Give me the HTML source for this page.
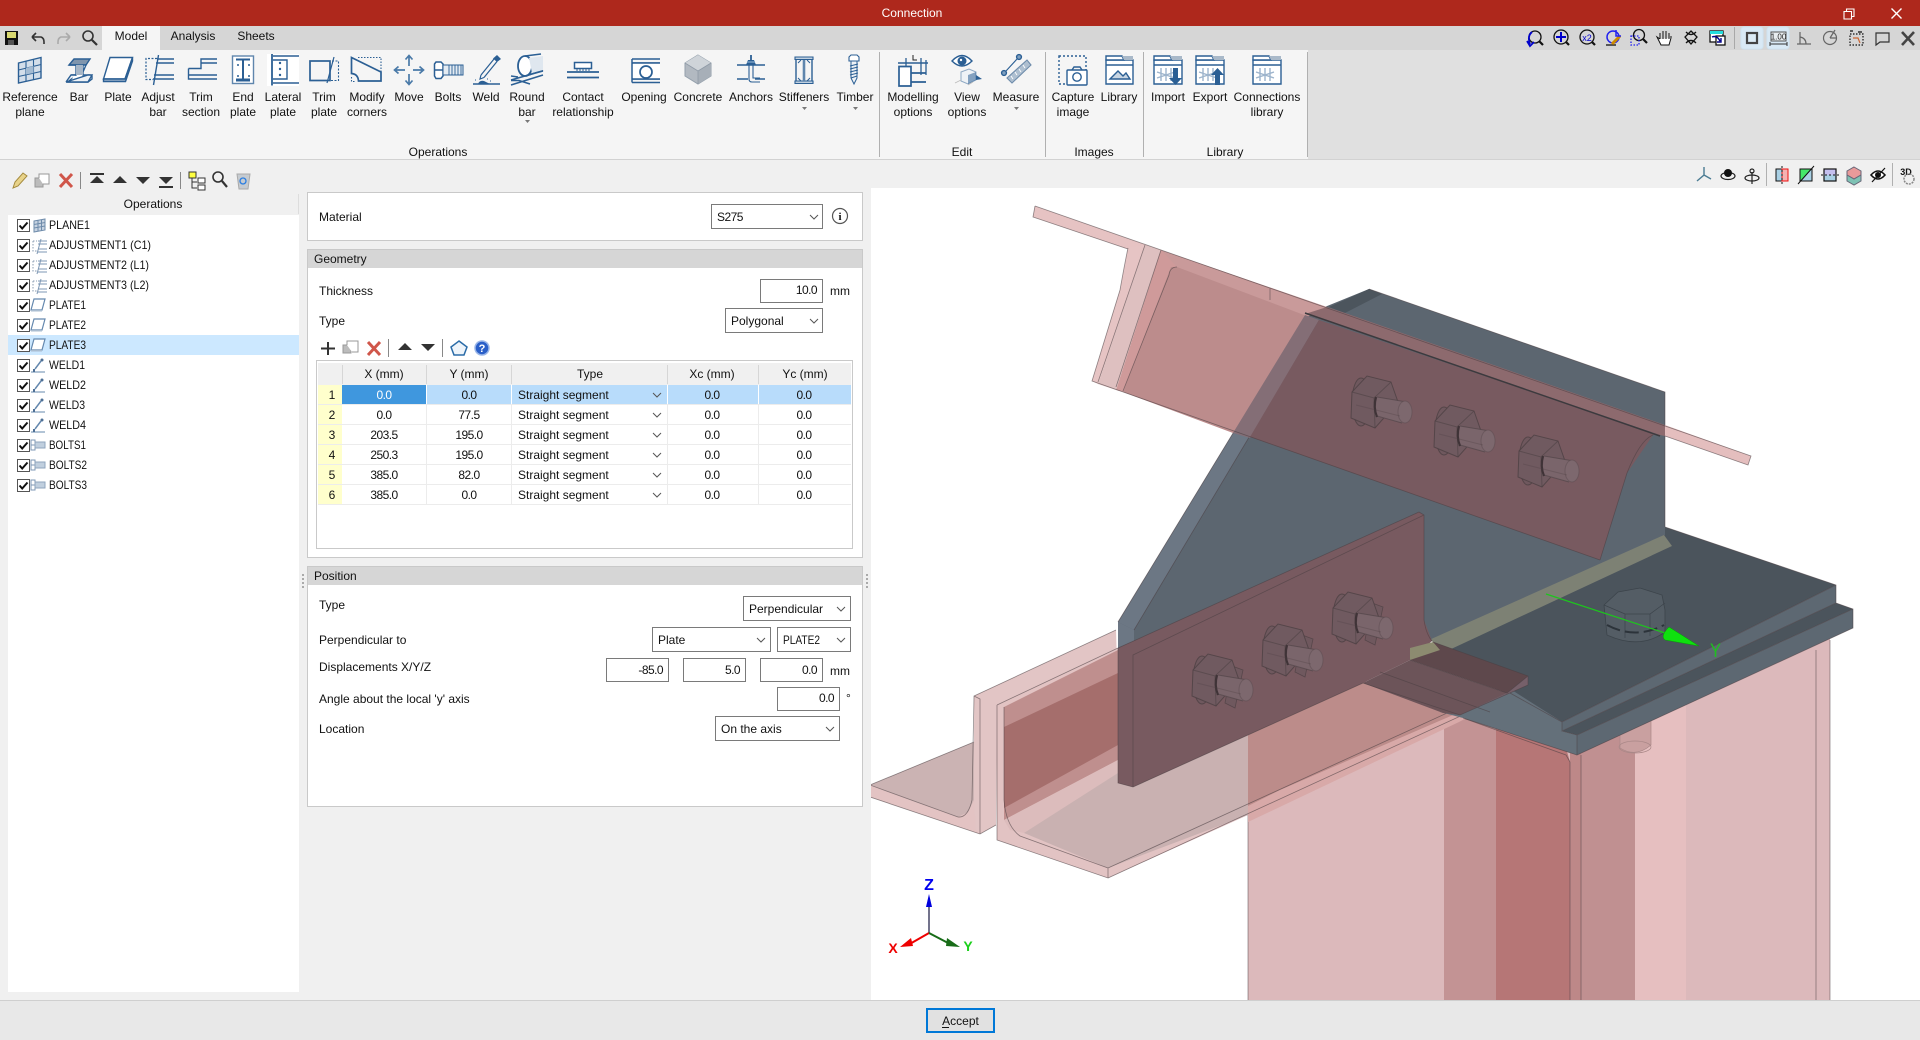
<!DOCTYPE html>
<html><head><meta charset="utf-8"><title>Connection</title>
<style>
html,body{margin:0;padding:0;background:#f0f0f0;width:1920px;height:1040px;overflow:hidden}
svg{display:block;position:absolute;left:0;top:0}
text{font-family:"Liberation Sans",sans-serif;font-size:12px;fill:#111}
.c{text-anchor:middle}.r{text-anchor:end}.w{fill:#fff}
.n{letter-spacing:-.55px}
.b{fill:none;stroke:#2b5f94;stroke-width:1.4}
.bf{fill:#2b5f94;stroke:none}
.fld{fill:#fff;stroke:#7a7a7a;stroke-width:1}
.chev{fill:none;stroke:#555;stroke-width:1}
.e{fill:none;stroke:#4b3f42;stroke-opacity:.6;stroke-width:.8}
</style></head><body>
<svg width="1920" height="1040" viewBox="0 0 1920 1040" xmlns="http://www.w3.org/2000/svg">
<defs>
<clipPath id="vp"><rect x="871" y="188" width="1049" height="812"/></clipPath>
<symbol id="tplane" overflow="visible"><path d="M2 3L13 1V12L2 14Z M6 2.500V13 M9.500 2V12.500 M2 6.500L13 4.500 M2 10L13 8" fill="#c8d4e2" stroke="#6f8cab"/></symbol>
<symbol id="tadj" overflow="visible"><path d="M1 3H5 M1 3V13H5" fill="none" stroke="#8a9cb2" stroke-dasharray="1.500 1.500"/><path d="M6 3H15 M6 6H15 M6 11H15 M6 14H15 M9 1L5 16" fill="none" stroke="#7d97b4"/></symbol>
<symbol id="tplate" overflow="visible"><path d="M4 1H15L12 12H1Z" fill="#fff" stroke="#6488ae" stroke-width="1.200"/><path d="M1 12H12L12 13.500H1Z" fill="#aabdd1"/></symbol>
<symbol id="tweld" overflow="visible"><path d="M11 3L5 11" fill="none" stroke="#6488ae" stroke-width="1.500"/><circle cx="12" cy="2" r="1.500" fill="#4d6f94"/><path d="M1 14H15" stroke="#6488ae"/><path d="M4 11V14" stroke="#4d6f94" stroke-width="2"/></symbol>
<symbol id="tbolt" overflow="visible"><path d="M1 3H5V13H1Z M1 8H5" fill="#fff" stroke="#7d97b4"/><path d="M5 5H15V11H5Z" fill="#c0cfde" stroke="#8fa5bd"/></symbol>
<symbol id="chk" overflow="visible"><rect x=".5" y=".5" width="12" height="12" fill="#fff" stroke="#555"/><path d="M2.500 6.500L5.200 9.500L10.500 3.500" fill="none" stroke="#111" stroke-width="2"/></symbol>
<g id="bolt">
<ellipse cx="1361" cy="402" rx="9" ry="24" fill="#6f585e" stroke="#4b3f42" stroke-opacity=".75"/>
<path d="M1352 392L1367 376L1391 382L1398 402L1375 428L1351 418Z" fill="#705a60" stroke="#4b3f42" stroke-opacity=".75"/>
<path d="M1352 392L1374 398L1391 382 M1374 398L1375 428" fill="none" stroke="#4b3f42" stroke-opacity=".55"/>
<path d="M1377 397L1407 402L1402 423L1375 416Z" fill="#7a656b"/>
<path d="M1377 397L1407 402M1377 416L1402 423" stroke="#4b3f42" stroke-opacity=".6" fill="none"/>
<path d="M1376 397Q1373 407 1377 417" stroke="#3f3337" stroke-width="2.200" fill="none"/>
<ellipse cx="1405" cy="412" rx="7" ry="11" fill="#7d686e" stroke="#5b4b50" stroke-opacity=".5"/>
<path d="M1356 405L1400 416" stroke="#4b3f42" stroke-opacity=".3" fill="none"/>
</g>
<path id="wing" d="M1372 603L1383 607L1375 645L1365 640Z" fill="#6f585e" stroke="#4b3f42" stroke-opacity=".7" stroke-width=".8"/>
</defs>

<!-- chrome -->
<rect width="1920" height="1040" fill="#f0f0f0"/>
<rect width="1920" height="26" fill="#ae281c"/>
<text x="912" y="17" class="c w">Connection</text>
<path d="M1844 11.500h7.500v7.500h-7.500z M1846.500 11.500v-2.500h7.500v7.500h-2.500" fill="none" stroke="#fff" stroke-width="1.100"/>
<path d="M1891.500 8.500l10 10m0-10l-10 10" stroke="#fff" stroke-width="1.400" fill="none"/>
<rect y="26" width="1920" height="24" fill="#d6d6d6"/>
<rect x="102" y="26" width="58" height="24" fill="#f5f5f5"/>
<text x="131" y="40" class="c">Model</text><text x="193" y="40" class="c">Analysis</text><text x="256" y="40" class="c">Sheets</text>
<!-- quick icons -->
<rect x="5" y="31" width="13" height="14" fill="#111"/><rect x="7" y="32" width="9" height="6" fill="#d8d870"/><rect x="8" y="40" width="6" height="5" fill="#555"/>
<path d="M32 37H41Q44 38 44 42V44 M32 37L36 33M32 37L36 41" fill="none" stroke="#333" stroke-width="1.600"/>
<path d="M70 37H61Q58 38 58 42V44 M70 37L66 33M70 37L66 41" fill="none" stroke="#aaa" stroke-width="1.600"/>
<circle cx="88" cy="36" r="5" fill="none" stroke="#333" stroke-width="1.600"/><path d="M92 40L97 45" stroke="#333" stroke-width="2.200"/>
<!-- ribbon -->
<rect y="50" width="1308" height="109" fill="#f5f5f5"/>
<rect x="1308" y="50" width="612" height="109" fill="#e0e0e0"/>
<rect y="159" width="1920" height="1" fill="#d2d2d2"/>
<g fill="#b0b0b0"><rect x="879" y="52" width="1" height="105"/><rect x="1045" y="52" width="1" height="105"/><rect x="1143" y="52" width="1" height="105"/><rect x="1307" y="52" width="1" height="105"/></g>
<g>
<text x="30" y="101" class="c">Reference</text><text x="30" y="116" class="c">plane</text>
<text x="79" y="101" class="c">Bar</text>
<text x="118" y="101" class="c">Plate</text>
<text x="158" y="101" class="c">Adjust</text><text x="158" y="116" class="c">bar</text>
<text x="201" y="101" class="c">Trim</text><text x="201" y="116" class="c">section</text>
<text x="243" y="101" class="c">End</text><text x="243" y="116" class="c">plate</text>
<text x="283" y="101" class="c">Lateral</text><text x="283" y="116" class="c">plate</text>
<text x="324" y="101" class="c">Trim</text><text x="324" y="116" class="c">plate</text>
<text x="367" y="101" class="c">Modify</text><text x="367" y="116" class="c">corners</text>
<text x="409" y="101" class="c">Move</text>
<text x="448" y="101" class="c">Bolts</text>
<text x="486" y="101" class="c">Weld</text>
<text x="527" y="101" class="c">Round</text><text x="527" y="116" class="c">bar</text>
<text x="583" y="101" class="c">Contact</text><text x="583" y="116" class="c">relationship</text>
<text x="644" y="101" class="c">Opening</text>
<text x="698" y="101" class="c">Concrete</text>
<text x="751" y="101" class="c">Anchors</text>
<text x="804" y="101" class="c">Stiffeners</text>
<text x="855" y="101" class="c">Timber</text>
<text x="913" y="101" class="c">Modelling</text><text x="913" y="116" class="c">options</text>
<text x="967" y="101" class="c">View</text><text x="967" y="116" class="c">options</text>
<text x="1016" y="101" class="c">Measure</text>
<text x="1073" y="101" class="c">Capture</text><text x="1073" y="116" class="c">image</text>
<text x="1119" y="101" class="c">Library</text>
<text x="1168" y="101" class="c">Import</text>
<text x="1210" y="101" class="c">Export</text>
<text x="1267" y="101" class="c">Connections</text><text x="1267" y="116" class="c">library</text>
<text x="438" y="156" class="c">Operations</text><text x="962" y="156" class="c">Edit</text><text x="1094" y="156" class="c">Images</text><text x="1225" y="156" class="c">Library</text>
</g>
<g fill="#777"><path d="M525 120h5l-2.500 3z"/><path d="M802 107h5l-2.500 3z"/><path d="M853 107h5l-2.500 3z"/><path d="M1014 107h5l-2.500 3z"/></g>
<!-- ribbon icons -->
<g class="b">
<!-- reference plane -->
<path d="M18.500 63L41 57.500V78L18.500 83Z" fill="#d3deea"/><path d="M26 61V81.500M33.500 59.500V80M18.500 70L41 64.500M18.500 76.500L41 71.500" stroke-width="1.100"/><path d="M26 68L33.500 66V73L26 74.500Z" fill="#a4bbd2" stroke="none"/>
<!-- bar -->
<path d="M69 65L74 59H90L86 65Z" fill="#7f95ad"/><path d="M86 65L83 72V65ZM83 65V75H90L92 76V79L88 82H68L72 78V75H76V65H69" fill="#fff"/><path d="M76 65H83V75H76Z" fill="#a6b6c7" stroke="none"/><path d="M66 82L71 75H76M88 75H92L88 82H66Z" fill="#eef2f6"/>
<!-- plate -->
<path d="M110 57.500H132.500L125 79H103.500Z" fill="#fff"/><path d="M103.500 79H125L132.500 57.500V61L125.500 81.500H103.500Z" fill="#9db4cc"/>
<!-- adjust bar -->
<path d="M157 58.500H146V79.500H153" stroke-dasharray="2 1.500" stroke-width="1.200"/><path d="M157 59H174M156 63H174M154 75H174M153 79H174M158.500 55L153.500 85"/>
<!-- trim section -->
<path d="M188.500 68.500H201V59H217M201 63H217M188.500 68.500V79H217M188.500 75H217"/>
<!-- end plate -->
<rect x="232.500" y="56" width="21" height="27.500" fill="#fff" stroke="#5f86ad"/><path d="M236 59.500H250M243 59.500V80M236 80H250" stroke-width="2"/><path d="M236 80H250" stroke-width="3"/>
<circle cx="238" cy="65" r="1" class="bf"/><circle cx="249" cy="65" r="1" class="bf"/><circle cx="238" cy="76" r="1" class="bf"/><circle cx="249" cy="76" r="1" class="bf"/>
<!-- lateral plate -->
<rect x="267" y="54" width="32" height="32" fill="#fff" stroke="none"/><path d="M272 54V85.500" stroke-width="1.800"/><path d="M273 56H299M273 83H299M273 60H287V79H273"/><circle cx="280" cy="63" r="1.200" class="bf"/><circle cx="280" cy="69" r="1.200" class="bf"/><circle cx="280" cy="75" r="1.200" class="bf"/>
<!-- trim plate -->
<rect x="310" y="61" width="20" height="19.500" fill="none" stroke-width="1.700"/><path d="M334 57L327 83" stroke-width="1.200"/><path d="M332 61H338.500V80.500H330" stroke-dasharray="2 1.500" stroke-width="1.100"/>
<!-- modify corners -->
<path d="M351.500 57.500L381 72V81H358.500Q358 74 351.500 73.500Z" fill="none" stroke-width="1.700"/><path d="M358 57.500H381V72M351.500 77V81.500H356" stroke-dasharray="1.500 1.500" stroke-width="1.100"/>
<!-- move -->
<path d="M409 56V66M409 74V84M395 70H405M413 70H423M405.500 59.500L409 55.500L412.500 59.500M405.500 80.500L409 84.500L412.500 80.500M398.500 66.500L394.500 70L398.500 73.500M419.500 66.500L423.500 70L419.500 73.500" stroke="#4a7aa8" stroke-width="1.700"/>
<!-- bolts -->
<path d="M434.500 64L436 62H441L443 64V76L441 78.500H436L434.500 76ZM434.500 70H443" fill="#fff" stroke-width="1.500"/><path d="M443 65H463V75H443Z" fill="#e4ebf2" stroke-width="1"/><path d="M449 65V75M452 65V75M455 65V75M458 65V75M461 65V75" stroke-width=".9"/>
<!-- weld -->
<path d="M481 75L494 59M484 77.500L497 61.500M481 75L480 79L484 77.500" stroke-width="1.200" fill="#fff"/><path d="M493 58.500L497 55L501 59L497 62Z" class="bf"/><path d="M473 84H500" stroke-width="1.500"/><path d="M478 84Q479.500 80 484 81L490 84Z" class="bf"/><path d="M475 80h1M487 79h1M490 81h1M482 78h1" stroke-width="1"/>
<!-- round bar -->
<ellipse cx="525" cy="66" rx="7" ry="10" fill="#fff" stroke-width="1.800"/><path d="M525 56L541 54M526 76L543 70" stroke-width="1.600"/><path d="M529 58L543 56V70L532 73Z" fill="#dfe7ef" stroke="none"/><path d="M511 80L532 74L543 71M511 85L543 75M511 80.500H519L530 84" stroke-width="1.500"/><path d="M511 76L518 77" stroke-width="1.400"/>
<!-- contact -->
<path d="M567 72H599M567 77.500H599" stroke-width="1.800"/><rect x="574.500" y="62.500" width="17" height="6" fill="#fff" stroke-width="1.500"/><path d="M577 68.500V71M580 68.500V71M583 68.500V71M586 68.500V71M589 68.500V71" stroke-width="1"/>
<!-- opening -->
<path d="M632 59H660M632 63H660M632 79H660M632 82.500H660" stroke-width="1.500"/><path d="M632 59V82.500" stroke-width="1.500"/><path d="M633 63.500H660V79H633Z" fill="#fff" stroke="none"/><path d="M632 63H660M632 79H660" stroke-width="1.500"/><circle cx="646" cy="72" r="6" fill="#fff" stroke-width="1.700"/>
<!-- concrete -->
<path d="M698 55L711 63V76L698 84L685 76V63Z" fill="#b2b9c1" stroke="#94a0ac" stroke-width="1"/><path d="M685 63L698 55L711 63L698 71Z" fill="#cfd4d9" stroke="none"/><path d="M698 71L711 63V76L698 84Z" fill="#a7afb8" stroke="none"/><path d="M685 63L698 71L711 63M698 71V84" stroke="#8f9aa6" stroke-width=".8"/>
<!-- anchors -->
<path d="M737 65H765M737 79H748M755 79H765" stroke-width="1.400"/><path d="M749 60V79Q749 82 752 82H760M753 60V78H760" stroke-width="1.100"/><path d="M746 65L748 60H754L756 65Z" class="bf"/><path d="M751 55V60" stroke-width="1.800"/><path d="M747 62H755" stroke="#7ea2c6"/>
<!-- stiffeners -->
<path d="M795 57H813V59.500H795ZM795 81H813V83.500H795Z" fill="#c0d0e0" stroke-width="1.100"/><path d="M796 60V81M812 60V81" stroke-width="1.400"/><path d="M804 60V81" stroke="#5f86ad" stroke-width="2.600"/><path d="M801 60L798 63M807 60L810 63M801 81L798 78M807 81L810 78" stroke-width="1"/>
<!-- timber -->
<path d="M849 57L851 55H857L859 57V61H849Z" fill="#fff" stroke-width="1.100"/><path d="M851 61H857V78L854 84L851 78Z" fill="#eef2f6" stroke-width="1"/><path d="M850 66L858 64M850 69L858 67M850 72L858 70M850 75L858 73M851 78L857 76" stroke-width="1"/>
<!-- modelling options -->
<path d="M898 63H928" stroke-width="1.500"/><path d="M906 58V74M921 58V75M926 60V75" stroke-width="1.300"/><path d="M913 55V60H917" stroke="#222" stroke-width="1"/><path d="M899 66.500H911V86H899Z" fill="#fff" stroke-width="1.700"/><path d="M911 73H926M911 82H926" stroke-width="1.700"/>
<!-- view options -->
<path d="M952 61Q962 50 972 61Q962 71 952 61Z" fill="#fff"/><circle cx="962" cy="61" r="4.500" class="bf"/><circle cx="961" cy="60" r="1.200" fill="#fff" stroke="none"/>
<path d="M961 72L969 69L976 72V80L968 84L961 81Z" fill="#eef2f6" stroke="#8fa9c4" stroke-width="1"/><path d="M976 72L968 75V84L976 80Z" class="bf" fill-opacity=".55"/><path d="M976 75L982 79L976 80Z" class="bf"/><path d="M955 83L961 80M973 82L968 85" stroke="#bbb" stroke-width=".8"/>
<!-- measure -->
<circle cx="1004" cy="73" r="2.400" fill="#7fa0c0"/><circle cx="1019" cy="57" r="2.400" fill="#7fa0c0"/><path d="M1006 71L1017 59" stroke-width="1.100"/><path d="M1007 78L1027 60L1031 65L1012 83Z" fill="#aebfd0" stroke="#6e8cab" stroke-width="1.100"/><path d="M1011 76l2 3M1015 72l2 3M1019 69l2 3M1023 65l2 3" stroke-width=".9" stroke="#fff"/>
<!-- capture -->
<rect x="1059" y="56" width="27" height="28" stroke-dasharray="2 2"/><rect x="1067" y="70" width="20" height="15" rx="1" fill="#fff"/><circle cx="1077" cy="77" r="4.200"/><path d="M1072 70L1074 67H1080L1082 70"/>
<!-- library -->
<path d="M1106 60H1133V84H1106Z M1106 65H1133" fill="#fff"/><path d="M1106 56H1122L1124 60H1106Z" fill="#fff"/><path d="M1122 56H1133V60H1124Z" fill="#a9b9c9" stroke="none"/><path d="M1110 79L1118 71L1123 76L1126 73L1130 79Z" fill="#c8d5e2"/>
<g id="lib"><path d="M1154 60H1182V84H1154Z M1154 65H1182" fill="#fff"/><path d="M1154 56H1170L1172 60H1154Z" fill="#fff"/><path d="M1170 56H1182V60H1172Z" fill="#a9b9c9" stroke="none"/><path d="M1161 68V81M1166 68V81M1171 68V81M1157 72L1175 78M1157 78L1175 72" stroke="#9db4cc" stroke-width="1.400"/></g>
<path d="M1173 68H1178V78H1182L1175.500 85L1169 78H1173Z" class="bf"/>
<use href="#lib" x="42"/><path d="M1215 85V75H1211L1217.500 68L1224 75H1220V85Z" class="bf"/>
<use href="#lib" x="99"/>
</g>
<!-- top-right icons -->
<g fill="none" stroke="#111" stroke-width="1.300">
<circle cx="1535" cy="37" r="6"/><path d="M1539 41L1543 45" stroke-width="2.200"/><path d="M1532 32Q1527 36 1530 44M1527 41L1530 46L1534 42" stroke="#00c" stroke-width="1.800"/>
<circle cx="1561" cy="37" r="7"/><path d="M1566 42L1569 45" stroke-width="2.200"/><path d="M1561 32V42M1556 37H1566" stroke="#00c" stroke-width="2"/>
<circle cx="1587" cy="37" r="7"/><path d="M1592 42L1595 45" stroke-width="2.200"/><text x="1587" y="41" class="c" style="font-size:9px;fill:#00c;stroke:none">x2</text>
<circle cx="1613" cy="37" r="6" stroke="#22e" stroke-width="1.500"/><path d="M1606 45H1616" /><path d="M1612 44L1620 36" stroke="#cc8a00" stroke-width="3"/><path d="M1616 30V36H1621" stroke="#22e" stroke-width="1.500"/>
<circle cx="1639" cy="35" r="5.500"/><path d="M1643 39L1647 43" stroke-width="2.200"/><rect x="1631" y="36" width="8" height="9" stroke="#22e" stroke-dasharray="1.500 1.500"/>
<path d="M1660 39V33M1663 39V31M1666 39V31M1669 39V33M1671 38V36M1660 39L1657 37L1661 45H1669L1671 38" fill="#fff" stroke-width="1"/>
<path d="M1691 31L1697 37L1691 44L1685 37Z M1686 32Q1691 37 1696 32M1686 43Q1691 38 1696 43"/>
<rect x="1710" y="31" width="13" height="11" fill="#fff" stroke="#111"/><rect x="1710" y="31" width="13" height="3" fill="#2dd" stroke="none"/><rect x="1716" y="36" width="9" height="9" fill="#fff"/><path d="M1712 37Q1717 35 1720 41M1717 42H1721V38" stroke="#008" stroke-width="1.400"/>
</g>
<rect x="1734" y="27" width="1" height="22" fill="#a8a8a8"/>
<rect x="1741" y="27" width="22" height="22" rx="3" fill="#d9e9f5" stroke="#cfe3f1"/>
<rect x="1767" y="27" width="22" height="22" rx="3" fill="#d9e9f5" stroke="#cfe3f1"/>
<rect x="1747" y="33" width="10" height="10" fill="#dcebf5" stroke="#444" stroke-width="2.200"/>
<rect x="1771" y="32" width="15" height="9" fill="#e8edf0" stroke="#555"/><text x="1778.500" y="39.500" class="c" style="font-size:8px;fill:#222">1.00</text><path d="M1770 44H1787M1770 42V46M1787 42V46" stroke="#333" fill="none"/>
<g fill="none" stroke="#666" stroke-width="1.200">
<path d="M1797 44H1811M1800 44L1800 32M1800 37Q1806 38 1806 44"/>
<circle cx="1830" cy="38" r="6.500"/><path d="M1830 38H1836M1830 38L1835 30"/>
<rect x="1850" y="34" width="13" height="11" stroke="#111" stroke-dasharray="1.500 1.500"/><path d="M1850 31H1853M1858 32H1862" stroke="#111"/><path d="M1853 38H1858L1860 43" stroke="#c63"/>
<path d="M1876 33H1889V42H1880L1876 45Z" stroke="#333"/>
<path d="M1902 32L1914 45M1914 32L1902 45" stroke="#444" stroke-width="2.600"/>
</g>
<!-- toolbar left -->
<path d="M13 188L15 182L23 173L27 176L18 186Z" fill="#e8d38a" stroke="#a58b3e"/>
<path d="M35 178h8v9h-8z" fill="#bcbcbc" stroke="#999"/><path d="M39 178v-4h10v10h-6" fill="#fff" stroke="#999"/>
<path d="M60 174L72 187M72 174L60 187" stroke="#d0564a" stroke-width="3" fill="none"/>
<rect x="80" y="172" width="1" height="17" fill="#888"/>
<g fill="#333"><rect x="90" y="173" width="14" height="2"/><path d="M97 176L104 183H90Z"/><path d="M120 176L127 183H113Z"/><path d="M136 177H150L143 184Z"/><path d="M159 177H173L166 184Z"/><rect x="159" y="186" width="14" height="2"/></g>
<rect x="180" y="172" width="1" height="17" fill="#888"/>
<rect x="189" y="172" width="7" height="6" fill="#ffff40" stroke="#333"/><path d="M192 178V188H197M192 182H197" fill="none" stroke="#333"/><rect x="198" y="178" width="7" height="5" fill="#fff" stroke="#333"/><rect x="198" y="185" width="7" height="5" fill="#fff" stroke="#333"/>
<circle cx="218" cy="177" r="5" fill="none" stroke="#333" stroke-width="1.600"/><path d="M222 181L227 187" stroke="#333" stroke-width="2.200"/>
<path d="M237 174H250L248 189H239Z" fill="#c6cbd0" stroke="#aaa"/><circle cx="243" cy="181" r="3" fill="none" stroke="#2a7de1" stroke-width="1.300"/>
<!-- toolbar right -->
<path d="M1704 167V175L1697 181M1704 175L1711 179" fill="none" stroke="#4b7c93" stroke-width="1.400"/>
<g fill="none" stroke="#222" stroke-width="1.200"><ellipse cx="1728" cy="176" rx="7" ry="3.500"/><ellipse cx="1752" cy="178" rx="7" ry="3"/><path d="M1752 172V184"/><circle cx="1752" cy="171" r="2"/></g>
<circle cx="1728" cy="173" r="4" fill="#111"/>
<rect x="1766" y="163" width="1" height="23" fill="#b0b0b0"/>
<rect x="1776" y="169" width="6" height="12" fill="#a9d0e4"/><rect x="1782" y="169" width="6" height="12" fill="#f4b2b2"/><path d="M1776 169H1782V181H1776Z" fill="none" stroke="#111"/><path d="M1782 169H1788V181H1782Z" fill="none" stroke="#e11"/><path d="M1782 166V184" stroke="#111" stroke-dasharray="2 2"/>
<path d="M1800 169H1812V181H1800Z" fill="#44e86a"/><path d="M1812 169V181H1800Z" fill="#a9d0e4"/><path d="M1798 184L1814 166" stroke="#111"/><rect x="1800" y="169" width="12" height="12" fill="none" stroke="#111"/>
<rect x="1824" y="169" width="12" height="6" fill="#c5c0ef"/><rect x="1824" y="175" width="12" height="6" fill="#a9d0e4"/><rect x="1824" y="169" width="12" height="12" fill="none" stroke="#111" stroke-width="1.200"/><path d="M1821 175H1839" stroke="#111" stroke-dasharray="2 2"/>
<path d="M1854 167L1861 171V175L1854 179L1847 175V171Z" fill="#e89a9a" stroke="#667"/><path d="M1847 175L1854 179L1861 175V181L1854 185L1847 181Z" fill="#7ec2b4" stroke="#667"/>
<path d="M1871 175Q1878 167 1885 175Q1878 183 1871 175Z" fill="#fff" stroke="#111" stroke-width="1.600"/><circle cx="1878" cy="175" r="3" fill="#111"/><path d="M1872 182L1885 168" stroke="#111" stroke-width="1.200"/>
<rect x="1892" y="163" width="1" height="23" fill="#b0b0b0"/>
<text x="1906" y="175" class="c" style="font-size:9px;font-weight:bold">3D</text><circle cx="1909" cy="179" r="5" fill="none" stroke="#888" stroke-width="1.500" stroke-dasharray="2 1"/>

<!-- operations tree -->
<rect x="8" y="192" width="291" height="23" fill="#f0f0f0"/>
<rect x="298" y="194" width="1" height="20" fill="#ddd"/>
<text x="153" y="208" class="c">Operations</text>
<rect x="8" y="215" width="291" height="777" fill="#fff"/>
<rect x="8" y="335" width="291" height="20" fill="#cce8ff"/>
<g>
<use href="#chk" x="17" y="219"/><use href="#tplane" x="32" y="218"/><text x="49" y="229" textLength="41" lengthAdjust="spacingAndGlyphs">PLANE1</text>
<use href="#chk" x="17" y="239"/><use href="#tadj" x="32" y="238"/><text x="49" y="249" textLength="102" lengthAdjust="spacingAndGlyphs">ADJUSTMENT1 (C1)</text>
<use href="#chk" x="17" y="259"/><use href="#tadj" x="32" y="258"/><text x="49" y="269" textLength="100" lengthAdjust="spacingAndGlyphs">ADJUSTMENT2 (L1)</text>
<use href="#chk" x="17" y="279"/><use href="#tadj" x="32" y="278"/><text x="49" y="289" textLength="100" lengthAdjust="spacingAndGlyphs">ADJUSTMENT3 (L2)</text>
<use href="#chk" x="17" y="299"/><use href="#tplate" x="30" y="298"/><text x="49" y="309" textLength="37" lengthAdjust="spacingAndGlyphs">PLATE1</text>
<use href="#chk" x="17" y="319"/><use href="#tplate" x="30" y="318"/><text x="49" y="329" textLength="37" lengthAdjust="spacingAndGlyphs">PLATE2</text>
<use href="#chk" x="17" y="339"/><use href="#tplate" x="30" y="338"/><text x="49" y="349" textLength="37" lengthAdjust="spacingAndGlyphs">PLATE3</text>
<use href="#chk" x="17" y="359"/><use href="#tweld" x="30" y="358"/><text x="49" y="369" textLength="36" lengthAdjust="spacingAndGlyphs">WELD1</text>
<use href="#chk" x="17" y="379"/><use href="#tweld" x="30" y="378"/><text x="49" y="389" textLength="37" lengthAdjust="spacingAndGlyphs">WELD2</text>
<use href="#chk" x="17" y="399"/><use href="#tweld" x="30" y="398"/><text x="49" y="409" textLength="36" lengthAdjust="spacingAndGlyphs">WELD3</text>
<use href="#chk" x="17" y="419"/><use href="#tweld" x="30" y="418"/><text x="49" y="429" textLength="37" lengthAdjust="spacingAndGlyphs">WELD4</text>
<use href="#chk" x="17" y="439"/><use href="#tbolt" x="30" y="437"/><text x="49" y="449" textLength="37" lengthAdjust="spacingAndGlyphs">BOLTS1</text>
<use href="#chk" x="17" y="459"/><use href="#tbolt" x="30" y="457"/><text x="49" y="469" textLength="38" lengthAdjust="spacingAndGlyphs">BOLTS2</text>
<use href="#chk" x="17" y="479"/><use href="#tbolt" x="30" y="477"/><text x="49" y="489" textLength="38" lengthAdjust="spacingAndGlyphs">BOLTS3</text>
</g>

<!-- material panel -->
<rect x="307.500" y="192.500" width="555" height="48" fill="#fff" stroke="#c9c9c9"/>
<text x="319" y="221">Material</text>
<rect x="711.500" y="204.500" width="111" height="24" class="fld"/><text x="717" y="221" class="n">S275</text><path d="M810 215l4 4 4-4" class="chev"/>
<circle cx="840" cy="216" r="7.500" fill="none" stroke="#555" stroke-width="1.200"/><text x="840" y="220" class="c" style="font-size:11px;font-family:'Liberation Serif',serif;font-weight:bold">i</text>

<!-- geometry panel -->
<rect x="307.500" y="249.500" width="555" height="308" fill="#fff" stroke="#c9c9c9"/>
<rect x="308" y="250" width="554" height="18" fill="#d6d6d6"/>
<text x="314" y="263">Geometry</text>
<text x="319" y="295">Thickness</text>
<rect x="760.500" y="279.500" width="62" height="23" class="fld"/><text x="817" y="294" class="r n">10.0</text><text x="830" y="295">mm</text>
<text x="319" y="325">Type</text>
<rect x="725.500" y="308.500" width="97" height="24" class="fld"/><text x="731" y="325">Polygonal</text><path d="M810 319l4 4 4-4" class="chev"/>
<!-- small toolbar -->
<path d="M328 342V355M321 348.500H335" stroke="#333" stroke-width="2" fill="none"/>
<path d="M343 345h8v8h-8z" fill="#bcbcbc" stroke="#999"/><path d="M347 345v-4h11v11h-6" fill="#fff" stroke="#999"/>
<path d="M368 342L380 355M380 342L368 355" stroke="#d0564a" stroke-width="3" fill="none"/>
<rect x="388" y="339" width="1" height="18" fill="#888"/>
<path d="M405 343L412 350H398Z M428 351L421 344H435Z" fill="#333"/>
<rect x="442" y="339" width="1" height="18" fill="#888"/>
<path d="M459 341L467 347L464 355H454L451 347Z" fill="#eef4fa" stroke="#2b6ca8" stroke-width="1.500"/>
<circle cx="482" cy="348" r="7" fill="#2a5fc8" stroke="#9ab6e8" stroke-width="1.500"/><text x="482" y="352" class="c w" style="font-size:11px;font-weight:bold">?</text>
<!-- table -->
<rect x="316.500" y="360.500" width="536" height="188" fill="#fff" stroke="#c9c9c9"/>
<rect x="318" y="363" width="533" height="22" fill="#f0f0f0"/>
<g fill="#d6d6d6"><rect x="342" y="365" width="1" height="19"/><rect x="426" y="365" width="1" height="19"/><rect x="511" y="365" width="1" height="19"/><rect x="667" y="365" width="1" height="19"/><rect x="758" y="365" width="1" height="19"/></g>
<text x="384" y="378" class="c">X (mm)</text><text x="469" y="378" class="c">Y (mm)</text><text x="590" y="378" class="c">Type</text><text x="712" y="378" class="c">Xc (mm)</text><text x="805" y="378" class="c">Yc (mm)</text>
<g fill="#ffffcc"><rect x="318" y="385" width="24" height="19"/><rect x="318" y="405" width="24" height="19"/><rect x="318" y="425" width="24" height="19"/><rect x="318" y="445" width="24" height="19"/><rect x="318" y="465" width="24" height="19"/><rect x="318" y="485" width="24" height="19"/></g>
<rect x="342" y="385" width="84" height="19" fill="#3f97de"/>
<rect x="427" y="385" width="84" height="19" fill="#b8dcfb"/><rect x="512" y="385" width="155" height="19" fill="#b8dcfb"/><rect x="668" y="385" width="90" height="19" fill="#b8dcfb"/><rect x="759" y="385" width="92" height="19" fill="#b8dcfb"/>
<g fill="#ececec"><rect x="318" y="404" width="533" height="1"/><rect x="318" y="424" width="533" height="1"/><rect x="318" y="444" width="533" height="1"/><rect x="318" y="464" width="533" height="1"/><rect x="318" y="484" width="533" height="1"/><rect x="318" y="504" width="533" height="1"/>
<rect x="426" y="405" width="1" height="100"/><rect x="511" y="405" width="1" height="100"/><rect x="667" y="405" width="1" height="100"/><rect x="758" y="405" width="1" height="100"/></g>
<g>
<text x="332" y="399" class="c">1</text><text x="384" y="399" class="c w n">0.0</text><text x="469" y="399" class="c n">0.0</text><text x="518" y="399">Straight segment</text><text x="712" y="399" class="c n">0.0</text><text x="804" y="399" class="c n">0.0</text>
<text x="332" y="419" class="c">2</text><text x="384" y="419" class="c n">0.0</text><text x="469" y="419" class="c n">77.5</text><text x="518" y="419">Straight segment</text><text x="712" y="419" class="c n">0.0</text><text x="804" y="419" class="c n">0.0</text>
<text x="332" y="439" class="c">3</text><text x="384" y="439" class="c n">203.5</text><text x="469" y="439" class="c n">195.0</text><text x="518" y="439">Straight segment</text><text x="712" y="439" class="c n">0.0</text><text x="804" y="439" class="c n">0.0</text>
<text x="332" y="459" class="c">4</text><text x="384" y="459" class="c n">250.3</text><text x="469" y="459" class="c n">195.0</text><text x="518" y="459">Straight segment</text><text x="712" y="459" class="c n">0.0</text><text x="804" y="459" class="c n">0.0</text>
<text x="332" y="479" class="c">5</text><text x="384" y="479" class="c n">385.0</text><text x="469" y="479" class="c n">82.0</text><text x="518" y="479">Straight segment</text><text x="712" y="479" class="c n">0.0</text><text x="804" y="479" class="c n">0.0</text>
<text x="332" y="499" class="c">6</text><text x="384" y="499" class="c n">385.0</text><text x="469" y="499" class="c n">0.0</text><text x="518" y="499">Straight segment</text><text x="712" y="499" class="c n">0.0</text><text x="804" y="499" class="c n">0.0</text>
</g>
<path d="M653 393l4 4 4-4M653 413l4 4 4-4M653 433l4 4 4-4M653 453l4 4 4-4M653 473l4 4 4-4M653 493l4 4 4-4" class="chev"/>

<!-- position panel -->
<rect x="307.500" y="566.500" width="555" height="240" fill="#fff" stroke="#c9c9c9"/>
<rect x="308" y="567" width="554" height="18" fill="#d6d6d6"/>
<text x="314" y="580">Position</text>
<g fill="#aaa"><rect x="302" y="574" width="2" height="2"/><rect x="302" y="578" width="2" height="2"/><rect x="302" y="582" width="2" height="2"/><rect x="302" y="586" width="2" height="2"/><rect x="866" y="574" width="2" height="2"/><rect x="866" y="578" width="2" height="2"/><rect x="866" y="582" width="2" height="2"/><rect x="866" y="586" width="2" height="2"/></g>
<text x="319" y="609">Type</text>
<rect x="743.500" y="596.500" width="107" height="24" class="fld"/><text x="749" y="613">Perpendicular</text><path d="M837 607l4 4 4-4" class="chev"/>
<text x="319" y="644">Perpendicular to</text>
<rect x="652.500" y="627.500" width="118" height="24" class="fld"/><text x="658" y="644">Plate</text><path d="M757 638l4 4 4-4" class="chev"/>
<rect x="777.500" y="627.500" width="73" height="24" class="fld"/><text x="783" y="644" textLength="37" lengthAdjust="spacingAndGlyphs">PLATE2</text><path d="M837 638l4 4 4-4" class="chev"/>
<text x="319" y="671">Displacements X/Y/Z</text>
<rect x="606.500" y="658.500" width="62" height="23" class="fld"/><text x="663" y="674" class="r n">-85.0</text>
<rect x="683.500" y="658.500" width="62" height="23" class="fld"/><text x="740" y="674" class="r n">5.0</text>
<rect x="760.500" y="658.500" width="62" height="23" class="fld"/><text x="817" y="674" class="r n">0.0</text><text x="830" y="675">mm</text>
<text x="319" y="703">Angle about the local 'y' axis</text>
<rect x="777.500" y="687.500" width="62" height="23" class="fld"/><text x="834" y="702" class="r n">0.0</text><text x="846" y="702">°</text>
<text x="319" y="733">Location</text>
<rect x="715.500" y="716.500" width="124" height="24" class="fld"/><text x="721" y="733">On the axis</text><path d="M826 727l4 4 4-4" class="chev"/>

<!-- 3D viewport -->
<rect x="871" y="188" width="1049" height="812" fill="#fff"/>
<g clip-path="url(#vp)">
<!-- column -->
<polygon fill="#dcb9bb" points="1248,1000 1248,735 1361,680 1459,712 1566,748 1581,748 1830,630 1830,1000"/>
<polygon fill="#c39394" points="1444,706 1496,725 1496,1000 1444,1000"/>
<polygon fill="#b67676" points="1496,725 1566,748 1570,762 1570,1000 1496,1000"/>
<rect x="1570" y="748" width="11" height="252" fill="#bd8888"/>
<polygon fill="#c09091" points="1581,748 1635,722 1635,1000 1581,1000"/>
<polygon fill="#e6bfc0" points="1635,722 1686,698 1686,1000 1635,1000"/>
<path class="e" d="M1570 762V1000M1581 755V1000M1816 650V1000M1830 640V1000M1248 735V1000M1463 718L1566 755L1570 762"/>
<path d="M1620 725L1651 712V745Q1636 758 1620 748Z" fill="#c9a0a0" stroke="#a88" stroke-width=".7"/>
<ellipse cx="1635" cy="747" rx="16" ry="6" fill="none" stroke="#a88" stroke-width=".7"/>
<!-- lower angles -->
<polygon fill="#e2c5c5" points="974,696 1116,630 1118,700 997,760 996,825 980,834 974,832"/>
<polygon fill="#e3c3c3" points="870,785 958,817 974,800 976,830 980,834 870,797"/>
<polygon fill="#cbb3b3" points="870,785 974,742 974,800 968,812 958,817"/>
<path class="e" d="M870 785L974 742M870 785L958 817Q968 818 972 800L974 696L1116 630M870 797L980 834L996 825M974 696L980 699V834"/>
<polygon fill="#e2c3c3" points="997,705 1118,648 1248,735 1248,815 1108,878 997,840"/>
<polygon fill="#bf8f8e" points="1004,707 1118,650 1118,760 1004,820"/>
<polygon fill="#a56e6c" points="1004,727 1118,673 1118,745 1004,808"/>
<polygon fill="#dcbcbc" points="1004,820 1118,760 1118,775 1024,833 1010,830"/>
<polygon fill="#c9b1b1" points="1024,833 1118,773 1248,735 1248,815 1108,868"/>
<polygon fill="#bc8c8a" points="1248,735 1361,680 1459,712 1463,718 1280,795 1248,815"/>
<polygon fill="#d8a9a8" points="1280,790 1460,712 1528,676 1528,685 1459,722 1248,822 1248,806"/>
<path class="e" d="M997 705V840L1108 878V868L1528 676M1108 878L1528 685M1004 707V800Q1006 826 1020 836L1108 868M997 705L1118 648"/>
<!-- base plates -->
<polygon fill="#64707a" points="1440,712 1510,688 1562,722 1562,731 1577,735 1577,755 1463,718"/>
<polygon fill="#4b545c" points="1665,527 1836,585 1562,722 1449,650 1430,640 1660,530"/>
<polygon fill="#5d6872" points="1836,585 1836,603 1562,731 1562,722"/>
<polygon fill="#4b545c" points="1836,603 1853,609 1577,735 1562,731"/>
<polygon fill="#5d6872" points="1853,609 1853,628 1577,755 1577,735"/>
<path class="e" d="M1665 527L1836 585V603L1853 609V628L1577 755V735L1853 609M1562 722L1836 585M1562 722V731L1836 603M1562 731L1577 735M1510 693L1562 722M1463 718L1577 755"/>
<!-- top bolt on base -->
<path d="M1604 605L1618 592L1640 588L1662 595L1665 610V632Q1640 650 1607 635Z" fill="#545d65" stroke="#3c444b" stroke-width=".8"/>
<path d="M1604 605L1625 614H1650L1665 603M1625 614V638M1650 614V636" fill="none" stroke="#3c444b" stroke-width=".7"/>
<path d="M1607 625Q1635 640 1664 625" fill="none" stroke="#2c333a" stroke-width="2" stroke-dasharray="14 5"/>
<!-- gusset -->
<polygon fill="#5c6670" points="1369,289 1665,392 1665,535 1430,640 1424,630 1424,515 1118,783 1118,622 1305,315"/>
<!-- weld -->
<polygon fill="#7d8174" points="1664,535 1672,546 1449,650 1429,640"/>
<polygon fill="#4c555d" points="1369,289 1382,294 1345,313 1329,307"/>
<polygon fill="#6c7784" points="1305,315 1319,320 1134,630 1118,622"/>
<path class="e" d="M1369 289L1665 392V527M1319 320L1134 630M1118 622L1305 315"/>
<!-- upper angle -->
<polygon fill="#e6c3c3" points="1035,206 1161,250 1128,249 1033,217"/>
<polygon fill="#e4bebe" points="1665,425 1751,456 1748,465 1665,436"/>
<polygon fill="#c99a9a" points="1161,250 1327,307 1305,318 1171,267 1150,280"/>
<polygon fill="#e6c4c4" points="1128,248 1145,245 1098,384 1092,381 1120,290"/>
<polygon fill="#dec0c0" points="1145,245 1161,250 1116,390 1098,384"/>
<polygon fill="#cf9a9a" points="1161,250 1177,267 1123,392 1116,390"/>
<polygon fill="#bc8c8c" points="1171,267 1177,267 1312,318 1233,433 1123,392"/>
<polygon fill="#846e76" points="1305,315 1319,320 1250,438 1233,433"/>
<polygon fill="#785a60" points="1319,320 1660,435 1653,435 1627,473 1600,560 1250,437"/>
<polygon fill="#8d6a6e" points="1327,307 1345,313 1665,425 1665,436 1660,435 1305,314"/>
<path d="M1305 313L1660 436" stroke="#3c3a3e" stroke-width="1.500" fill="none"/>
<path class="e" d="M1035 206L1751 456L1748 465L1665 436M1035 206L1033 217L1128 249M1128 248Q1125 262 1120 290L1092 381L1600 560M1145 245L1098 382M1161 250L1116 387M1177 267Q1170 267 1169 275L1123 391M1270 288V300M1653 435Q1640 440 1627 473L1600 560"/>
<use href="#bolt"/><use href="#bolt" x="83" y="29"/><use href="#bolt" x="167" y="59"/>
<!-- lower plate -->
<polygon fill="#6c7784" points="1118,622 1134,630 1134,641 1118,648"/>
<polygon fill="#785a60" points="1419,512 1424,515 1424,620 1432,641 1410,660 1363,683 1133,787 1118,783 1118,648"/>
<path class="e" d="M1419 512L1424 515V620Q1426 634 1432 641M1424 515L1133 655V787M1118 648L1419 512M1118 648V783L1133 787L1363 683"/>
<use href="#wing"/><use href="#wing" x="-70" y="32"/><use href="#wing" x="-140" y="63"/>
<use href="#bolt" x="-19" y="216"/><use href="#bolt" x="-89" y="248"/><use href="#bolt" x="-159" y="278"/>
<!-- tab -->
<polygon fill="#6c5459" points="1363,683 1410,660 1507,693 1460,715 1443,713"/>
<polygon fill="#5e484c" points="1410,660 1433,642 1528,676 1507,693"/>
<polygon fill="#76606a" points="1460,715 1528,685 1528,676 1507,693"/>
<polygon fill="#8c8b70" points="1410,648 1433,642 1440,650 1410,660"/>
<path class="e" d="M1380 672L1490 712M1433 642L1528 676V685L1460 715L1363 683M1410 660L1507 693L1528 676"/>
<!-- green axis -->
<path d="M1546 594L1668 634" stroke="#1ec41e" stroke-width="1.200" fill="none"/>
<path d="M1669 627L1699 646L1665 640Q1660 636 1669 627Z" fill="#0fe00f" stroke="#0a9a0a" stroke-width=".5"/>
<text x="1710" y="657" style="fill:#1fc01f;font-size:19px" textLength="11" lengthAdjust="spacingAndGlyphs">Y</text>
<!-- axes widget -->
<path d="M929 933V905" stroke="#446" stroke-width="1.500"/><path d="M926 907L929 894L932 907Z" fill="#00d"/>
<path d="M929 933L908 945" stroke="#e00" stroke-width="2"/><path d="M911 938L900 947L913 946Z" fill="#e00"/>
<path d="M929 933L950 944" stroke="#186c18" stroke-width="2"/><path d="M947 938L960 947L946 946Z" fill="#186c18"/>
<text x="929" y="890" class="c" style="fill:#00e;font-weight:bold;font-size:16px">Z</text>
<text x="893" y="953" class="c" style="fill:#e00;font-weight:bold;font-size:14px">X</text>
<text x="968" y="951" class="c" style="fill:#1dd01d;font-weight:bold;font-size:14px">Y</text>
</g>
<!-- bottom bar -->
<rect y="1000" width="1920" height="40" fill="#e8e8e8"/><rect y="1000" width="1920" height="1" fill="#cfcfcf"/>
<rect x="927" y="1009" width="67" height="23" fill="#e1e1e1" stroke="#0078d7" stroke-width="2"/>
<text x="960.500" y="1025" class="c">Accept</text><rect x="942" y="1027" width="7" height="1" fill="#111"/>
</svg>
</body></html>
